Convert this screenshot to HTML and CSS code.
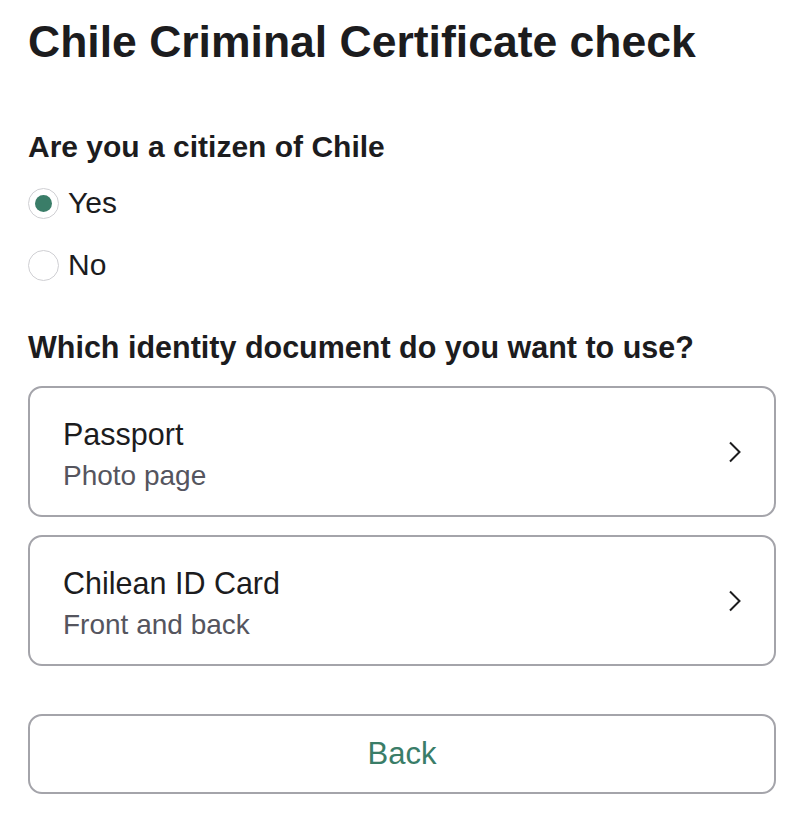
FILE: index.html
```html
<!DOCTYPE html>
<html lang="en">
<head>
    <meta charset="UTF-8">
    <meta name="viewport" content="width=device-width, initial-scale=1.0">
    <title>Chile Criminal Certificate check</title>
    <link rel="stylesheet" href="styles.css">
</head>
<body>
    <div class="page">
        <h1>Chile Criminal Certificate check</h1>

        <fieldset class="question">
            <legend>Are you a citizen of Chile</legend>
            <label class="radio">
                <input type="radio" name="citizen" value="yes" checked>
                <span class="dot"></span>
                Yes
            </label>
            <label class="radio">
                <input type="radio" name="citizen" value="no">
                <span class="dot"></span>
                No
            </label>
        </fieldset>

        <h2>Which identity document do you want to use?</h2>

        <div class="doc-list">
            <a href="#" class="doc">
                <div class="doc-text">
                    <span class="doc-title">Passport</span>
                    <span class="doc-sub">Photo page</span>
                </div>
                <svg class="chevron" width="14" height="22" viewBox="0 0 14 22">
                    <path d="M2 1.5 L11.5 11 L2 20.5" fill="none" stroke="#1c1c1e" stroke-width="2"/>
                </svg>
            </a>
            <a href="#" class="doc">
                <div class="doc-text">
                    <span class="doc-title">Chilean ID Card</span>
                    <span class="doc-sub">Front and back</span>
                </div>
                <svg class="chevron" width="14" height="22" viewBox="0 0 14 22">
                    <path d="M2 1.5 L11.5 11 L2 20.5" fill="none" stroke="#1c1c1e" stroke-width="2"/>
                </svg>
            </a>
        </div>

        <button type="button" class="back-btn">Back</button>
    </div>
</body>
</html>
```

FILE: styles.css
```css
* { margin: 0; padding: 0; box-sizing: border-box; }
body {
    font-family: 'Liberation Sans', Arial, sans-serif;
    color: #1c1c1e;
    background: white;
}
.page { padding: 16px 35px 20px 28px; }
h1 { font-size: 44.5px; font-weight: bold; line-height: 52px; margin-bottom: 61px; }
.question { border: none; margin-bottom: 44px; }
.question legend { font-size: 30px; font-weight: bold; line-height: 36px; margin-bottom: 18px; }
.radio {
    display: flex; align-items: center; font-size: 30px; line-height: 40px;
    margin-bottom: 22px; cursor: pointer;
}
.radio:last-child { margin-bottom: 0; }
.radio input { display: none; }
.dot {
    width: 31px; height: 31px; border-radius: 50%; border: 1.5px solid #cfcfd3;
    margin-right: 9px; display: flex; align-items: center; justify-content: center;
}
.radio input:checked + .dot::after {
    content: ""; width: 17px; height: 17px; border-radius: 50%; background: #3a7d68;
}
h2 { font-size: 30.5px; font-weight: bold; line-height: 36px; margin-bottom: 21px; }
.doc-list { display: flex; flex-direction: column; gap: 18px; margin-bottom: 48px; }
.doc {
    display: flex; align-items: center; justify-content: space-between;
    height: 131px; padding: 0 32px 0 33px;
    border: 2px solid #a4a4aa; border-radius: 14px;
    text-decoration: none; color: inherit;
}
.doc-text { display: flex; flex-direction: column; gap: 5px; padding-top: 6px; }
.doc-title { font-size: 30.5px; line-height: 38px; }
.doc-sub { font-size: 28px; line-height: 36px; color: #55555e; }
.back-btn {
    display: block; width: 100%; height: 80px;
    background: white; border: 2px solid #a4a4aa; border-radius: 14px;
    font-family: inherit; font-size: 31px; color: #3a7d68; cursor: pointer;
}
```
